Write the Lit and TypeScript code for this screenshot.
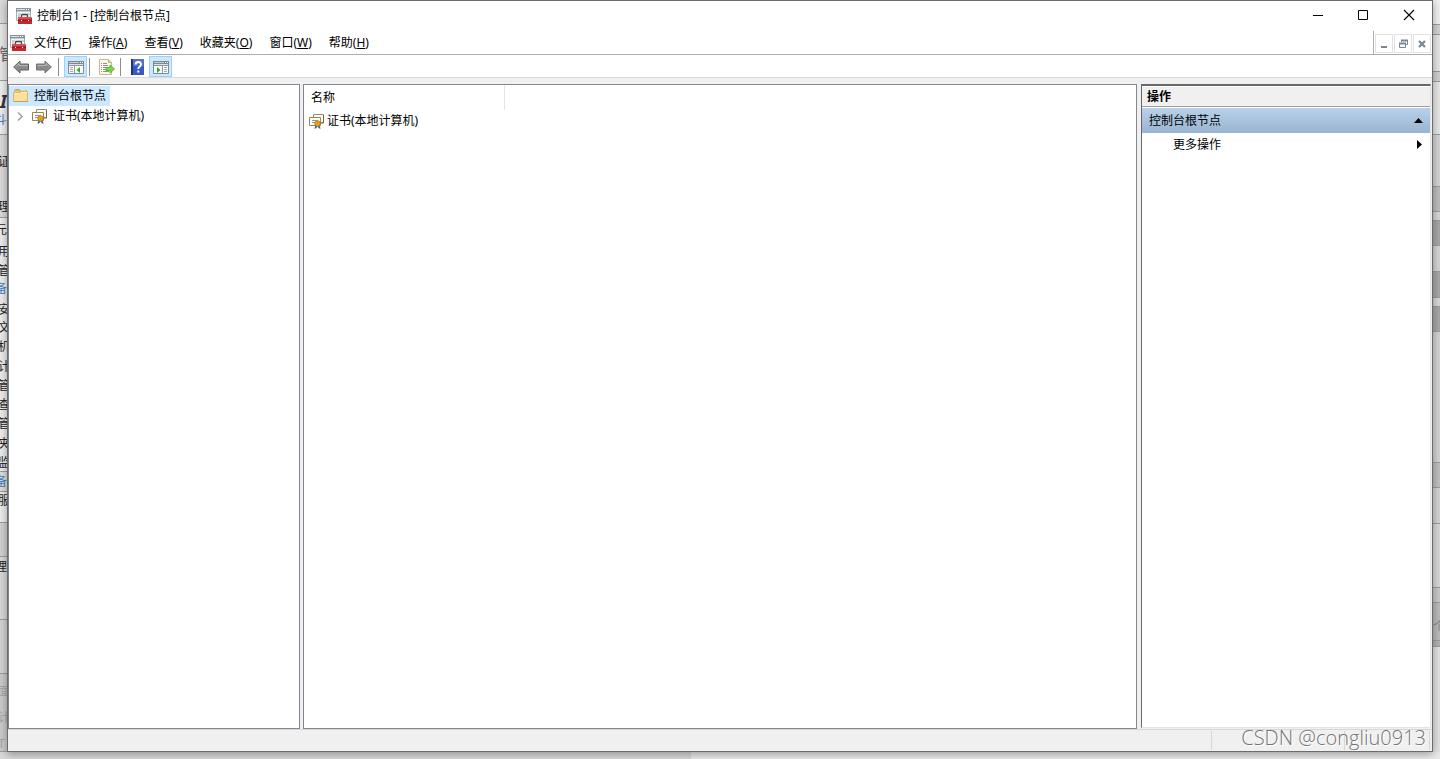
import { LitElement, html, css, svg } from "lit";
import { customElement, property } from "lit/decorators.js";

const glyphs: Record<string, unknown> = {
  console: svg`
    <path d="M0 0h15v13H0z" fill="#fff"/><path d="M.5.5h14v12H.5z" fill="#f2f4f5" stroke="#a4adb4"/>
    <path d="M0 0h15v4H0z" fill="#8996a1"/><path d="M1 1h8v1H1z" fill="#d9e0e5"/><path d="M10 1h1v1h-1zM12 1h1v1h-1z" fill="#fff"/><path d="M1 3h13v1H1z" fill="#c3cbd1"/>
    <path d="M2 6h3M2 8h2M11 6h3" stroke="#a5afb8"/>
    <path d="M5.500 9V7.500q0-1 1-1h4q1 0 1 1V9" fill="none" stroke="#3e4449" stroke-width="1.300"/>
    <path d="M2 9h13l1 1v6H2z" fill="#c4292e"/><path d="M2 9h13v2H2z" fill="#d8504f"/>
    <path d="M2 12.500h14" stroke="#961a20"/><path d="M5 12h1v1H5zM12 12h1v1h-1z" fill="#fff"/>`,
  back: svg`<path d="M.700 8 7 2v3h8.500v6H7v3z" fill="#8b8b8b" stroke="#606060" stroke-linejoin="round"/><path d="M2.500 7.800 6 4.500v2h8.500" fill="none" stroke="#b8b8b8"/>`,
  forward: svg`<path d="M15.300 8 9 2v3H.500v6H9v3z" fill="#8b8b8b" stroke="#707070" stroke-linejoin="round"/><path d="M1.500 6.500H10v-2l3.500 3.300" fill="none" stroke="#b8b8b8"/>`,
  tree: svg`<path d="M.5 2.500h15v12H.5z" fill="#fafafa" stroke="#818b94"/><path d="M0 2h16v3H0z" fill="#7d8890"/><path d="M1 3h10v1H1z" fill="#c9d0d5"/><path d="M12 3h1v1h-1zM14 3h1v1h-1z" fill="#fff"/>
    <path d="M1 5.500h14" stroke="#dde1e4"/><path d="M1 6.500h14M6.500 7v7" stroke="#8e989f"/><path d="M2 8.500h3M2 10.500h3M2 12.500h3" stroke="#9ba9b3"/><path d="M12 8v6L8.500 11z" fill="#32a832"/>`,
  pane: svg`<path d="M.5 2.500h15v12H.5z" fill="#fafafa" stroke="#818b94"/><path d="M0 2h16v3H0z" fill="#7d8890"/><path d="M1 3h10v1H1z" fill="#c9d0d5"/><path d="M12 3h1v1h-1zM14 3h1v1h-1z" fill="#fff"/>
    <path d="M1 5.500h14" stroke="#dde1e4"/><path d="M1 6.500h14M9.500 7v7" stroke="#8e989f"/><path d="M11 8.500h3M11 10.500h3M11 12.500h3" stroke="#9ba9b3"/><path d="M4 8v6l3.500-3z" fill="#32a832"/>`,
  export: svg`<path d="M.5.5h9l3 3v12H.5z" fill="#fff9e2" stroke="#c6b98e"/><path d="M9.500.5v3h3" fill="#e5d7aa" stroke="#b9aa7b"/><path d="M2 4.500h1M4 4.500h4M2 6.500h1M4 6.500h5M2 8.500h1M4 8.500h3M2 10.500h1M4 10.500h3M2 12.500h1M4 12.500h6" stroke="#8c94a3"/><path d="M7 8.500h4V6l4.500 4-4.500 4v-2.500H7z" fill="#79d84d" stroke="#55b837"/>`,
  help: svg`<path d="M1 0h13v16H1z" fill="#3759c0"/><path d="M1 0h2v16H1z" fill="#1c337f"/><path d="M3 0h11v7H3z" fill="#5272d2"/><path d="M5.600 5.500q0-2.500 2.700-2.500T11 5.500q0 1.500-1.600 2.400Q8.300 8.500 8.300 10" fill="none" stroke="#fff" stroke-width="1.900"/><path d="M7.300 11.500h2v2h-2z" fill="#fff"/>`,
  folder: svg`<path d="M1.500 3.500v-1l1-1h4l1 1h6v2" fill="#e9bd55" stroke="#c9a653"/><path d="M8 2.500h5v3H8z" fill="#fff"/><path d="M.5 4.500h7l1-1h6v10H.5z" fill="#fbe09a" stroke="#dcb768"/><path d="M1 13.500h14" stroke="#c5a052"/><path d="M1.500 5.500h6l1-1H14" fill="none" stroke="#fff1bf"/>`,
  cert: svg`<path d="M4.500 1.500h10v8h-10z" fill="#fff" stroke="#a38b68"/><path d="M14.500 2v8H11" fill="none" stroke="#74613f"/>
    <path d="M.5 4.500h11v8H.5z" fill="#fffef8" stroke="#a08054"/><path d="M3 7.500h6M3 9.500h3" stroke="#889abb"/>
    <path d="m6.500 11-1 5 2-1 1-2 1 2 2 1-1-5z" fill="#2d67cb"/><circle cx="8.500" cy="10.500" r="2.700" fill="#f0ae19" stroke="#bd7b07"/><circle cx="8.500" cy="10.500" r="1" fill="#d89007"/>`,
  chevron: svg`<path d="m6 4.500 4 4-4 4" fill="none" stroke="#a0a0a0" stroke-width="1.500"/>`,
  minimize: svg`<path d="M4 7.500h10" stroke="#000"/>`,
  maximize: svg`<path d="M3.500 2.500h9v9h-9z" fill="none" stroke="#000"/>`,
  close: svg`<path d="m3 2 10 10M13 2 3 12" stroke="#000" stroke-width="1.100"/>`,
  childMin: svg`<path d="M5 11h6" stroke="#788696" stroke-width="2"/>`,
  childRestore: svg`<path d="M6.500 6V4.500h6v4H11" fill="none" stroke="#788696"/><path d="M6 4.500h7M4 7.500h7" stroke="#788696" stroke-width="2"/><path d="M4.500 7.500h6v4h-6z" fill="none" stroke="#788696"/>`,
  childClose: svg`<path d="m5 5 6 6M11 5l-6 6" stroke="#788696" stroke-width="2.200"/>`,
  up: svg`<path d="M7.500 5 12 10H3z" fill="#000"/>`,
  right: svg`<path d="M6 3v9l5-4.500z" fill="#000"/>`,
};

@customElement("mmc-icon")
class MmcIcon extends LitElement {
  @property() name = "";
  static styles = css`
    :host { display: block; width: 16px; height: 16px; flex: none; }
    svg { display: block; }
  `;
  render() {
    return html`<svg width="16" height="16" viewBox="0 0 16 16" aria-hidden="true">${glyphs[this.name]}</svg>`;
  }
}

/* Windows lying behind the console: only their edges show. */
const leftRows: [number, string, string][] = [
  [46, "管", "large"], [92, "I", "italic"], [112, "斗", "blue"], [154, "证", ""], [199, "理", ""],
  [222, "元", "near"], [244, "用", ""], [263, "管", ""], [281, "备", "blue"], [302, "安", ""],
  [320, "文", ""], [339, "机", ""], [359, "计", ""], [378, "管", ""], [397, "查", ""],
  [416, "管", ""], [436, "夹", ""], [455, "监", ""], [474, "备", "blue"], [493, "服", ""],
  [559, "理", "near"], [684, "面", "faint"], [710, "计", "faint"], [736, "T", "faint"],
];
const leftBands: [number, number, string][] = [
  [0, 24, "#d9d9d9"], [24, 57, "#e6e6e6"], [81, 54, "#ededed"], [135, 83, "#d9d9d9"],
  [218, 254, "#ececec"], [472, 20, "#dcdcdc"], [492, 31, "#ececec"], [523, 34, "#d0d0d0"],
  [557, 63, "#d8d8d8"], [620, 54, "#d2d2d2"], [674, 78, "#cacaca"],
];
const rightBands: [number, number, string][] = [
  [0, 25, "#f0f0f0"], [25, 10, "#d2d2d2"], [35, 37, "#e5e5e5"], [72, 10, "#cfcfcf"],
  [82, 53, "#e6e6e6"], [135, 52, "#d3d3d3"], [187, 25, "#bcbcbc"], [212, 9, "#d5d5d5"],
  [221, 25, "#a7a7a7"], [246, 26, "#d4d4d4"], [272, 26, "#a7a7a7"], [298, 9, "#d5d5d5"],
  [307, 25, "#a7a7a7"], [332, 131, "#d2d2d2"], [463, 25, "#bfbfbf"], [488, 36, "#d2d2d2"],
  [524, 64, "#d7d7d7"], [588, 15, "#c8c8c8"], [603, 38, "#bababa"], [641, 6, "#b2b2b2"], [647, 112, "#e2e2e2"],
];

@customElement("app-root")
class AppRoot extends LitElement {
  static styles = css`
    :host {
      display: flex; box-sizing: border-box; height: 100vh; padding: 0 7px 7px; position: relative; overflow: hidden;
      background: #d6d6d6; color: #000; font: 12px/16px "Noto Sans", "Noto Sans CJK SC", sans-serif;
    }
    * { box-sizing: border-box; }
    button { font: inherit; color: inherit; background: none; border: 0; padding: 0; margin: 0; white-space: nowrap; }
    h1, h2 { font: inherit; margin: 0; }
    ul { list-style: none; margin: 0; padding: 0; }
    .backdrop { position: absolute; inset: 0; overflow: hidden; }
    .bottom { position: absolute; left: 0; right: 0; bottom: 0; height: 7px; background: linear-gradient(90deg, #d8d8d8 48%, #e9e9e9 48%); }
    .band { position: absolute; width: 7px; border-bottom: 1px solid #9c9c9c; }
    .band.l { left: 0; }
    .band.r { right: 0; }
    .scrap { position: absolute; left: -2px; color: #222; white-space: nowrap; }
    .scrap.near { left: -5px; }
    .scrap.large { left: -1px; font-size: 16px; color: #666; }
    .scrap.italic { left: 0; font: italic bold 18px/18px "Noto Sans", sans-serif; color: #334; }
    .scrap.blue { color: #4380b8; left: -5px; }
    .scrap.faint { color: #a5a5a5; }
    .scrap.right { left: auto; right: -5px; color: #888; }
    .window {
      position: relative; flex: 1; min-width: 0; display: flex; flex-direction: column; background: #f0f0f0;
      border: 1px solid #6c6c6c; box-shadow: 0 2px 8px rgba(0, 0, 0, .35);
    }
    .title { display: flex; align-items: center; height: 30px; padding-left: 8px; background: #fff; }
    .title h1 { flex: 1; padding-left: 5px; word-spacing: normal; }
    .caption { display: flex; justify-content: center; align-items: center; width: 46px; height: 30px; }
    .menu { display: flex; height: 24px; padding-left: 2px; background: #fff; border-bottom: 1px solid #adadad; }
    .menu > mmc-icon { margin-top: 4px; }
    .items { flex: 1; display: flex; gap: 17px; align-items: center; padding-left: 8px; }
    .child { display: flex; gap: 1px; border-left: 1px solid #adadad; padding: 3px 1px 1px 1px; }
    .child button { border: 1px solid #e2e2e2; width: 18px; display: flex; align-items: center; justify-content: center; }
    .tools { display: flex; align-items: center; height: 23px; padding: 1px 5px 0; background: #fff; border-bottom: 1px solid #d9d9d9; }
    .tool { display: flex; justify-content: center; align-items: center; width: 23px; height: 21px; }
    .tool.on { background: #cce8ff; border: 1px solid #99d1ff; }
    .nav { width: 16px; }
    .nav + .nav { margin-left: 7px; }
    .rule { width: 1px; height: 18px; background: #8d8d8d; margin: 0 5px 0 6px; }
    .rule.tight { margin: 0 5px 0 2px; }
    .body { flex: 1; min-height: 0; display: grid; grid-template-columns: 292px minmax(0, 1fr) 295px; padding-top: 6px; }
    .tree, .list { background: #fff; border: 1px solid #828790; }
    .list { margin-left: 3px; }
    .tree { padding-top: 1px; }
    .node { display: flex; align-items: center; height: 20px; }
    .node .label { display: flex; align-items: center; height: 20px; padding: 0 4px; gap: 5px; }
    .node.root .label { background: #cce8ff; }
    .node.leaf { padding-left: 3px; }
    .node.leaf .label { padding-left: 4px; }
    table { border-collapse: collapse; }
    th { width: 200px; height: 25px; padding: 1px 0 0 7px; text-align: left; font-weight: normal; border-right: 1px solid #e5e5e5; }
    td { padding: 3px 0 0 5px; }
    td .cell { display: flex; align-items: center; gap: 2px; white-space: nowrap; }
    .actions { margin: 0 1px 1px 4px; background: #fff; border: solid; border-width: 2px 1px 1px 1px; border-color: #696969 #e3e3e3 #e3e3e3 #696969; }
    .actions h2 { height: 21px; padding: 2px 0 0 5px; background: #f0f0f0; font-weight: bold; border-bottom: 1px solid #a0a0a0; border-top: 1px solid #fff; }
    .actions button { display: flex; width: 100%; align-items: center; justify-content: space-between; text-align: left; height: 24px; padding: 0 3px 0 31px; }
    .actions .group { height: 25px; margin-top: 1px; padding-left: 7px; background: linear-gradient(#b9d1ea, #99b4d1); }
    .status { height: 22px; display: flex; justify-content: flex-end; border-top: 1px solid #d7d7d7; padding: 1px 2px 1px 0; }
    .status span { width: 133px; border-left: 1px solid #d7d7d7; }
    .status span:last-child { width: 86px; border-right: 1px solid #d7d7d7; }
    .mark { position: absolute; right: 14px; bottom: 8px; font: 300 20px/26px "Open Sans", "Noto Sans", sans-serif; color: #747474; text-shadow: 1px 1px 0 #fff; }
  `;

  menus: [string, string][] = [["文件", "F"], ["操作", "A"], ["查看", "V"], ["收藏夹", "O"], ["窗口", "W"], ["帮助", "H"]];

  band(side: string, [top, height, color]: [number, number, string]) {
    return html`<div class="band ${side}" style="top:${top}px;height:${height}px;background:${color}"></div>`;
  }

  render() {
    return html`
      <div class="backdrop" aria-hidden="true">
        ${leftBands.map((b) => this.band("l", b))} ${rightBands.map((b) => this.band("r", b))}
        ${leftRows.map(([y, t, c]) => html`<span class="scrap ${c}" style="top:${y}px">${t}</span>`)}
        <span class="scrap right" style="top:619px">个</span>
        <div class="bottom"></div>
      </div>
      <main class="window">
        <header class="title">
          <mmc-icon name="console"></mmc-icon>
          <h1>控制台1 - [控制台根节点]</h1>
          <button class="caption" aria-label="最小化"><mmc-icon name="minimize"></mmc-icon></button>
          <button class="caption" aria-label="最大化"><mmc-icon name="maximize"></mmc-icon></button>
          <button class="caption" aria-label="关闭"><mmc-icon name="close"></mmc-icon></button>
        </header>
        <nav class="menu">
          <mmc-icon name="console"></mmc-icon>
          <div class="items">${this.menus.map(([t, k]) => html`<button>${t}(<u>${k}</u>)</button>`)}</div>
          <div class="child">
            <button aria-label="最小化"><mmc-icon name="childMin"></mmc-icon></button>
            <button aria-label="还原"><mmc-icon name="childRestore"></mmc-icon></button>
            <button aria-label="关闭"><mmc-icon name="childClose"></mmc-icon></button>
          </div>
        </nav>
        <div class="tools" role="toolbar">
          <button class="tool nav" aria-label="后退"><mmc-icon name="back"></mmc-icon></button>
          <button class="tool nav" aria-label="前进"><mmc-icon name="forward"></mmc-icon></button>
          <span class="rule"></span>
          <button class="tool on" aria-label="控制台树"><mmc-icon name="tree"></mmc-icon></button>
          <span class="rule tight"></span>
          <button class="tool" aria-label="导出列表"><mmc-icon name="export"></mmc-icon></button>
          <span class="rule tight"></span>
          <button class="tool" aria-label="帮助"><mmc-icon name="help"></mmc-icon></button>
          <button class="tool on" aria-label="操作窗格"><mmc-icon name="pane"></mmc-icon></button>
        </div>
        <div class="body">
          <ul class="tree">
            <li class="node root"><button class="label"><mmc-icon name="folder"></mmc-icon>控制台根节点</button></li>
            <li class="node leaf">
              <button aria-label="展开"><mmc-icon name="chevron"></mmc-icon></button>
              <button class="label"><mmc-icon name="cert"></mmc-icon>证书(本地计算机)</button>
            </li>
          </ul>
          <section class="list">
            <table>
              <thead><tr><th>名称</th></tr></thead>
              <tbody><tr><td><div class="cell"><mmc-icon name="cert"></mmc-icon>证书(本地计算机)</div></td></tr></tbody>
            </table>
          </section>
          <aside class="actions">
            <h2>操作</h2>
            <button class="group">控制台根节点<mmc-icon name="up"></mmc-icon></button>
            <button>更多操作<mmc-icon name="right"></mmc-icon></button>
          </aside>
        </div>
        <footer class="status"><span></span><span></span></footer>
      </main>
      <div class="mark">CSDN @congliu0913</div>
    `;
  }
}
